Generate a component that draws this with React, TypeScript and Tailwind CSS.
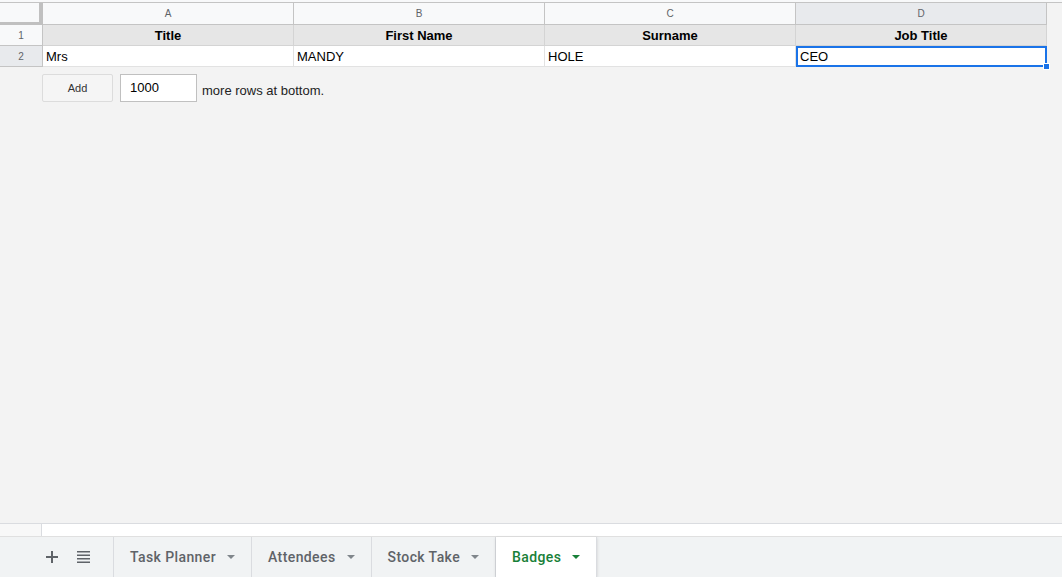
import React from "react";

const columns = ["A", "B", "C", "D"];
const headerRow = ["Title", "First Name", "Surname", "Job Title"];
const dataRow = ["Mrs", "MANDY", "HOLE", "CEO"];
const tabs = ["Task Planner", "Attendees", "Stock Take", "Badges"];

const Caret = ({ green }: { green?: boolean }) => (
  <svg width="8" height="4" viewBox="0 0 8 4" className="ml-[11px]">
    <path d="M0 0h8L4 4z" fill={green ? "#188038" : "#80868b"} />
  </svg>
);

const App = () => {
  return (
    <div
      className="flex h-[577px] w-[1062px] flex-col overflow-hidden bg-[#f3f3f3]"
      style={{ fontFamily: '"Liberation Sans", Arial, sans-serif' }}
    >
      <div className="flex-1">
        <div className="h-[2px] bg-[#f8f9fa]" />
        {/* column letters */}
        <div className="flex h-[23px] border-t border-[#c4c4c4]">
          <div className="w-[43px] border-r-[4px] border-b-[3px] border-[#c0c0c0] bg-[#f8f9fa]" />
          {columns.map((c) => (
            <div
              key={c}
              className={`flex w-[251px] items-center justify-center border-r border-b border-[#c4c4c4] text-[10px] text-[#5f6368] ${
                c === "D" ? "bg-[#e8eaed]" : "bg-[#f8f9fa]"
              }`}
            >
              {c}
            </div>
          ))}
        </div>
        {/* row 1 */}
        <div className="flex h-[21px]">
          <div className="flex w-[43px] items-center justify-center border-r border-b border-[#c4c4c4] bg-[#f8f9fa] text-[10px] text-[#5f6368]">
            1
          </div>
          {headerRow.map((h) => (
            <div
              key={h}
              className="flex w-[251px] items-end justify-center border-r border-b border-[#d4d4d4] bg-[#e6e6e6] pb-[1px] text-[13px] leading-[16px] font-bold text-black"
            >
              {h}
            </div>
          ))}
        </div>
        {/* row 2 */}
        <div className="flex h-[21px]">
          <div className="flex w-[43px] items-center justify-center border-r border-b border-[#c4c4c4] bg-[#e8eaed] text-[10px] text-[#5f6368]">
            2
          </div>
          {dataRow.map((v, i) => (
            <div
              key={v}
              className={`relative flex w-[251px] items-end bg-white text-[13px] leading-[16px] text-black ${
                i === 3 ? "border-2 border-[#1a73e8] pb-0 pl-[2px]" : "border-r border-b border-[#e2e2e2] pb-[1px] pl-[3px]"
              }`}
            >
              {v}
              {i === 3 && (
                <div className="absolute -right-[5px] -bottom-[5px] h-[7px] w-[7px] border border-white bg-[#1a73e8]" />
              )}
            </div>
          ))}
        </div>
        {/* add rows */}
        <div className="mt-[7px] flex items-center pl-[42px]">
          <button className="h-[28px] w-[71px] rounded-[2px] border border-[#dcdcdc] bg-[#f5f5f5] text-[11px] text-[#333]">
            Add
          </button>
          <div className="ml-[7px] flex h-[28px] w-[77px] items-center border border-[#c0c0c0] bg-white pl-[9px] text-[13px] text-black">
            1000
          </div>
          <span className="mt-[6px] ml-[5px] text-[13px] text-[#222]">more rows at bottom.</span>
        </div>
      </div>

      {/* horizontal scrollbar strip */}
      <div className="flex h-[13px] border-t border-[#dadce0] bg-white">
        <div className="w-[42px] border-r border-[#dadce0] bg-[#f8f8f8]" />
      </div>

      {/* sheet tabs */}
      <div
        className="flex h-[41px] border-t border-[#e0e0e0] bg-[#f1f3f4]"
        style={{ fontFamily: "Roboto, Arial, sans-serif" }}
      >
        <div className="flex w-[114px] items-center border-r border-[#dadce0] pl-[46px]">
          <svg width="12" height="12" viewBox="0 0 12 12">
            <path d="M5 0h2v5h5v2H7v5H5V7H0V5h5z" fill="#5f6368" />
          </svg>
          <svg width="13" height="12" viewBox="0 0 13 12" className="ml-[19px]">
            <path d="M0 0h13v1.6H0zM0 3.5h13v1.6H0zM0 7h13v1.6H0zM0 10.4h13V12H0z" fill="#5f6368" />
          </svg>
        </div>
        {tabs.map((t) => {
          const active = t === "Badges";
          return (
            <div
              key={t}
              className={`flex items-center border-r border-[#dadce0] pr-[16px] pl-[16px] text-[14px] font-medium tracking-[0.4px] ${
                active ? "bg-white text-[#188038] shadow-[0_1px_3px_rgba(60,64,67,0.2)]" : "text-[#5f6368]"
              }`}
            >
              {t}
              <Caret green={active} />
            </div>
          );
        })}
      </div>
    </div>
  );
};

export default App;
